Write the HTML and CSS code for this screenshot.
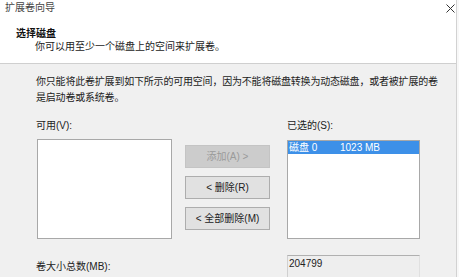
FILE: index.html
```html
<html>
  <head>
    <meta charset="utf-8">
    <link rel="stylesheet" href="styles.css">
  </head>
  <body>
    <div class="wizard">
      <!-- white header: title bar + step heading -->
      <div class="header">
        <div class="titlebar">
          <span class="title">扩展卷向导</span>
          <svg class="close" width="9" height="9" viewBox="0 0 9 9">
            <path d="M0.5 0.5 L8.5 8.5 M8.5 0.5 L0.5 8.5" stroke="#333" stroke-width="1" fill="none"/>
          </svg>
        </div>
        <div class="intro">
          <div class="heading">选择磁盘</div>
          <div class="subtitle">你可以用至少一个磁盘上的空间来扩展卷。</div>
        </div>
      </div>

      <!-- gray page body -->
      <div class="content">
        <p class="note">你只能将此卷扩展到如下所示的可用空间，因为不能将磁盘转换为动态磁盘，或者被扩展的卷<br>是启动卷或系统卷。</p>

        <div class="picker">
          <div class="label">可用(V):</div>
          <div></div>
          <div class="label">已选的(S):</div>

          <div class="listbox available"></div>
          <div class="buttons">
            <div class="button disabled">添加(A) &gt;</div>
            <div class="button">&lt; 删除(R)</div>
            <div class="button">&lt; 全部删除(M)</div>
          </div>
          <div class="listbox selected">
            <div class="item active"><span class="disk">磁盘 0</span><span>1023 MB</span></div>
          </div>

          <div class="label total">卷大小总数(MB):</div>
          <div></div>
          <div class="field">204799</div>
        </div>
      </div>
    </div>
  </body>
</html>
```
FILE: styles.css
```css
/* wizard page: white header, gray body */
* {
  margin: 0;
  padding: 0;
  box-sizing: border-box;
}

body {
  width: 459px;
  height: 277px;
  overflow: hidden;
  background-color: #f8f8f8;
  font-family: "Liberation Sans", "Noto Sans CJK SC", sans-serif;
  font-size: 10px;
  color: #222;
}

.wizard {
  width: 457px;
  height: 277px;
  border-right: 1px solid #d2d2d2;
  display: flex;
  flex-direction: column;
}

/* header ---------------------------------------- */
.header {
  height: 66px;
  background-color: #fff;
  border-bottom: 1px solid #cfcfcf;
}

.titlebar {
  height: 15px;
  display: flex;
  justify-content: space-between;
  align-items: center;
  padding-left: 5px;
  padding-right: 1px;
  line-height: 15px;
  color: #444;
}

.close {
  margin-top: 1px;
}

.intro {
  padding-top: 12px;
  line-height: 13px;
}

.heading {
  padding-left: 16px;
  font-weight: bold;
  color: #111;
}

.subtitle {
  padding-left: 35px;
}

/* body ------------------------------------------ */
.content {
  flex: 1;
  background-color: #f0f0f0;
  padding-top: 10px;
  padding-left: 36px;
}

.note {
  line-height: 16px;
  white-space: nowrap;
  letter-spacing: -0.2px;
}

.picker {
  display: grid;
  grid-template-columns: 149px 102px 133px;
  margin-top: 12px;
}

.label {
  line-height: 16px;
}

.listbox {
  margin-top: 5px;
  background-color: #fff;
  border: 1px solid #a8a8a8;
}

.available {
  margin-left: 1px;
  width: 135px;
  height: 100px;
}

.selected {
  margin-top: 6px;
  width: 133px;
  height: 99px;
}

.item {
  height: 13px;
  line-height: 13px;
  padding-left: 1px;
  display: flex;
}

.item.active {
  background-color: #3d90e8;
  color: #fff;
}

.disk {
  width: 51px;
}

.buttons {
  margin-top: 11px;
  display: flex;
  flex-direction: column;
  gap: 8px;
}

.button {
  width: 85px;
  height: 23px;
  line-height: 21px;
  text-align: center;
  border: 1px solid #adadad;
  background-color: #e1e1e1;
}

.button.disabled {
  background-color: #cccccc;
  border-color: #c4c4c4;
  color: #9a9a9a;
}

.total {
  margin-top: 20px;
}

.field {
  margin-top: 16px;
  width: 133px;
  height: 22px;
  padding-top: 1px;
  padding-left: 1px;
  line-height: 14px;
  border-top: 1px solid #b0b0b0;
  border-left: 1px solid #d0d0d0;
  border-right: 1px solid #e0e0e0;
  background-color: #eeeeee;
}
```
